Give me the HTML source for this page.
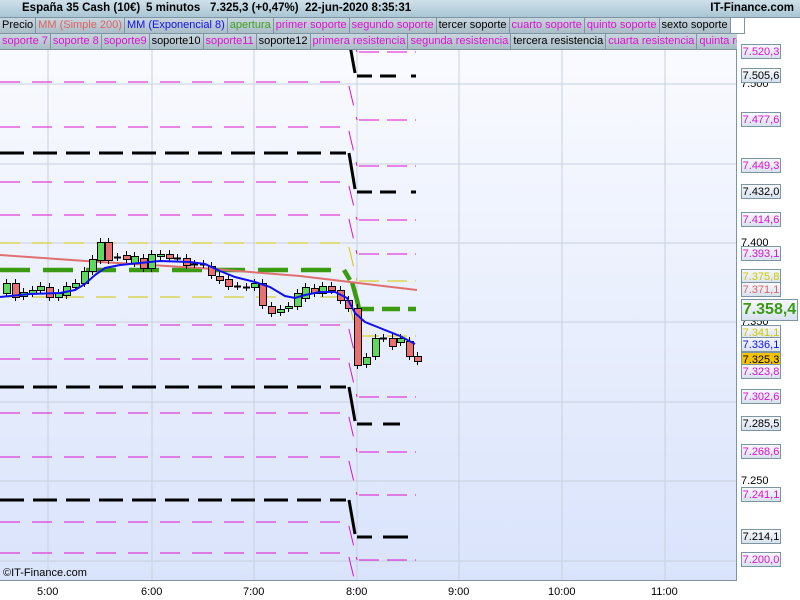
<!DOCTYPE html>
<html><head><meta charset="utf-8"><style>
*{margin:0;padding:0;box-sizing:border-box}
body{width:800px;height:600px;overflow:hidden;background:#fff;font-family:"Liberation Sans",sans-serif;position:relative}
#hdr{position:absolute;left:0;top:0;width:800px;height:18px;background:linear-gradient(#cfe0ea,#a9c6d4);border-bottom:1px solid #7d95a2;font-size:11.5px;font-weight:bold;color:#000}
#hdr span{position:absolute;top:2px;white-space:nowrap}
.row{position:absolute;left:0;height:16px;font-size:11px;white-space:nowrap;display:flex}
.row div{height:16px;line-height:15px;padding:0 2px;background:linear-gradient(#c8d6de,#aabdc8);border-right:1px solid #7d95a2;border-bottom:1px solid #7d95a2}
.pk{color:#e010d0}.bk{color:#000}
.lab{position:absolute;left:741px;width:40px;height:15px;font-size:11px;line-height:14px;text-align:center;border:1px solid #7d95a2;background:linear-gradient(#f6f8fc,#d8e2ee)}
.pl{position:absolute;left:741px;font-size:11px;line-height:12px}
.xl{position:absolute;top:586px;font-size:11px;color:#000}
</style></head><body>
<svg width="800" height="600" style="position:absolute;left:0;top:0">
<defs><linearGradient id="bg" x1="0" y1="0" x2="0" y2="1"><stop offset="0" stop-color="#fbfcff"/><stop offset="1" stop-color="#d9e3fb"/></linearGradient></defs>
<rect x="0" y="18" width="737" height="562" fill="url(#bg)"/>
<g stroke="#c8d0de" stroke-width="1">
<line x1="48" y1="34" x2="48" y2="580"/><line x1="152" y1="34" x2="152" y2="580"/><line x1="254" y1="34" x2="254" y2="580"/><line x1="357" y1="34" x2="357" y2="580"/><line x1="459" y1="34" x2="459" y2="580"/><line x1="562" y1="34" x2="562" y2="580"/><line x1="665" y1="34" x2="665" y2="580"/>
<line x1="0" y1="84" x2="737" y2="84"/><line x1="0" y1="164" x2="737" y2="164"/><line x1="0" y1="243" x2="737" y2="243"/><line x1="0" y1="322" x2="737" y2="322"/><line x1="0" y1="402" x2="737" y2="402"/><line x1="0" y1="481" x2="737" y2="481"/><line x1="0" y1="561" x2="737" y2="561"/>
</g>
<g fill="none" stroke="#e010d0" stroke-width="1">
<path d="M0 82H348L357 120" stroke-dasharray="20 12"/>
<path d="M0 127H348L357 166" stroke-dasharray="20 12"/>
<path d="M0 182H348L357 220" stroke-dasharray="20 12"/>
<path d="M0 215H348L357 254" stroke-dasharray="20 12"/>
<path d="M0 325H348L357 364" stroke-dasharray="20 12"/>
<path d="M0 359H348L357 397" stroke-dasharray="20 12"/>
<path d="M0 413H348L357 452" stroke-dasharray="20 12"/>
<path d="M0 457H348L357 495" stroke-dasharray="20 12"/>
<path d="M0 522H348L357 560" stroke-dasharray="20 12"/>
<path d="M0 553H348L357 591" stroke-dasharray="20 12"/>
<path d="M346 20L357 52"/>
<path d="M359 52H416M359 120H416M359 166H416M359 220H416M359 254H416M359 397H416M359 452H416M359 495H416M359 560H416" stroke-dasharray="20 8 20 8 1 8"/>
</g>
<g fill="none" stroke="#d0c800" stroke-width="1">
<path d="M0 243H348L357 281" stroke-dasharray="20 12"/>
<path d="M0 297H348L357 336" stroke-dasharray="20 12"/>
<path d="M359 281H416M359 336H416" stroke-dasharray="20 8 20 8 1 8"/>
</g>
<g fill="none" stroke="#000" stroke-width="3">
<path d="M0 153H346M0 387H346M0 500H346" stroke-dasharray="24 9"/>
<path d="M349 153L355 189M349 387L355 421M349 500L355 534M349 40L355 73"/>
<path d="M357 76H372M380 76H396M411 76H416M357 192H372M380 192H396M411 192H416M357 424H372M383 424H400M357 537H372M383 537H408"/>
</g>
<path d="M0 270H344L350 280" fill="none" stroke="#3a9a10" stroke-width="4.5" stroke-dasharray="30 13"/>
<path d="M352 282L357 300L359 309H374M382 309H400M408 309H416" fill="none" stroke="#3a9a10" stroke-width="4.5"/>
<path d="M0 255L100 262L200 268L300 276L350 282L417 290" fill="none" stroke="#e07070" stroke-width="2"/>
<g id="c" stroke="#000" stroke-width="1"></g>
<path d="M0 297L30 294L60 293L75 290L85 284L95 275L105 268L120 265L140 263L160 261L190 262L205 264L220 271L235 277L255 282L270 287L285 296L295 298L305 295L320 292L335 292L347 298L355 313L365 322L380 328L400 336L415 344" fill="none" stroke="#1010f0" stroke-width="2"/>
<line x1="736.5" y1="18" x2="736.5" y2="580" stroke="#7d95a2"/>
<line x1="0" y1="580.5" x2="737" y2="580.5" stroke="#7d95a2"/>
<g fill="#e07070" stroke="#b04040" stroke-width="1"><rect x="8" y="6" width="5" height="9"/></g>
<g fill="#60e060" stroke="#207020" stroke-width="1"><rect x="14" y="3" width="5" height="11"/><line x1="16.5" y1="1" x2="16.5" y2="3"/></g>
<line x1="10.5" y1="3" x2="10.5" y2="6" stroke="#b04040"/>
</svg>
<div id="hdr"><span style="left:22px">España 35 Cash (10€)</span><span style="left:146px">5 minutos</span><span style="left:210px">7.325,3 (+0,47%)</span><span style="left:305px">22-jun-2020 8:35:31</span><span style="right:6px">IT-Finance.com</span></div>
<div class="row" style="top:18px"><div class="bk">Precio</div><div style="color:#e06060">MM (Simple 200)</div><div style="color:#1010f0">MM (Exponencial 8)</div><div style="color:#40a020">apertura</div><div class="pk">primer soporte</div><div class="pk">segundo soporte</div><div class="bk">tercer soporte</div><div class="pk">cuarto soporte</div><div class="pk">quinto soporte</div><div class="bk">sexto soporte</div><div style="background:#fff;width:14px"></div></div>
<div class="row" style="top:34px;width:737px;overflow:hidden"><div class="pk">soporte 7</div><div class="pk">soporte 8</div><div class="pk">soporte9</div><div class="bk">soporte10</div><div class="pk">soporte11</div><div class="bk">soporte12</div><div class="pk">primera resistencia</div><div class="pk">segunda resistencia</div><div class="bk">tercera resistencia</div><div class="pk">cuarta resistencia</div><div class="pk">quinta resistencia</div></div>
<div class="pl" style="top:78px">7.500</div><div class="pl" style="top:237px">7.400</div><div class="pl" style="top:316px">7.350</div><div class="pl" style="top:475px">7.250</div>
<div class="lab pk" style="top:44px">7.520,3</div>
<div class="lab bk" style="top:68px">7.505,6</div>
<div class="lab pk" style="top:112px">7.477,6</div>
<div class="lab pk" style="top:158px">7.449,3</div>
<div class="lab bk" style="top:184px">7.432,0</div>
<div class="lab pk" style="top:212px">7.414,6</div>
<div class="lab pk" style="top:246px">7.393,1</div>
<div class="lab" style="top:269px;color:#d0c800">7.375,8</div>
<div class="lab" style="top:282px;color:#e06060">7.371,1</div>
<div class="lab" style="top:299px;width:57px;height:22px;font-size:16px;line-height:20px;font-weight:bold;color:#3a9a10">7.358,4</div>
<div class="lab" style="top:325px;color:#d0c800">7.341,1</div>
<div class="lab" style="top:337px;color:#1010f0">7.336,1</div>
<div class="lab" style="top:352px;background:#f5c400;color:#000">7.325,3</div>
<div class="lab pk" style="top:364px">7.323,8</div>
<div class="lab pk" style="top:389px">7.302,6</div>
<div class="lab bk" style="top:416px">7.285,5</div>
<div class="lab pk" style="top:444px">7.268,6</div>
<div class="lab pk" style="top:487px">7.241,1</div>
<div class="lab bk" style="top:529px">7.214,1</div>
<div class="lab pk" style="top:552px">7.200,0</div>
<div style="position:absolute;left:3px;top:567px;font-size:11px">©IT-Finance.com</div>
<div class="xl" style="left:37px">5:00</div><div class="xl" style="left:141px">6:00</div><div class="xl" style="left:243px">7:00</div><div class="xl" style="left:346px">8:00</div><div class="xl" style="left:448px">9:00</div><div class="xl" style="left:548px">10:00</div><div class="xl" style="left:651px">11:00</div>
<script>
var C=[[6,'g',283,293],[15,'r',283,297],[23,'g',292,296],[32,'g',290,293],[40,'g',286,290],[49,'r',287,297],[58,'g',293,297],[66,'g',286,295],[75,'g',283,287],[84,'g',271,283],[92,'g',259,271],[100,'g',242,260],[108,'r',242,260],[117,'d',257,257],[126,'r',255,259],[134,'g',256,263],[143,'r',258,268],[151,'g',254,268],[160,'g',254,256],[169,'r',254,258],[177,'d',258,258],[186,'r',258,265],[194,'d',264,264],[203,'d',264,264],[211,'r',266,275],[219,'r',276,280],[228,'r',279,286],[237,'d',286,286],[246,'d',287,287],[254,'g',283,287],[262,'r',283,305],[271,'r',306,313],[280,'g',309,312],[288,'g',306,308],[297,'g',293,306],[305,'g',287,298],[314,'r',288,293],[322,'g',286,293],[331,'r',286,290],[340,'r',290,300],[348,'r',300,308],[357,'r',308,365],[366,'g',357,364],[375,'g',338,356],[383,'d',338,338],[392,'r',338,346],[400,'g',338,342],[409,'r',341,356],[417,'r',356,361]];
var g=document.getElementById('c'),s='';
C.forEach(function(c){var x=c[0],t=c[2],b=c[3];s+='<line x1="'+(x+.5)+'" y1="'+(t-4)+'" x2="'+(x+.5)+'" y2="'+(b+4)+'"/>';
if(c[1]=='d')s+='<line x1="'+(x-3)+'" y1="'+t+'.5" x2="'+(x+4)+'" y2="'+t+'.5" stroke-width="2"/>';
else s+='<rect x="'+(x-3)+'.5" y="'+t+'.5" width="7" height="'+Math.max(2,b-t)+'" fill="'+(c[1]=='g'?'#60d860':'#e87070')+'"/>';});
g.innerHTML=s;
</script>
</body></html>
